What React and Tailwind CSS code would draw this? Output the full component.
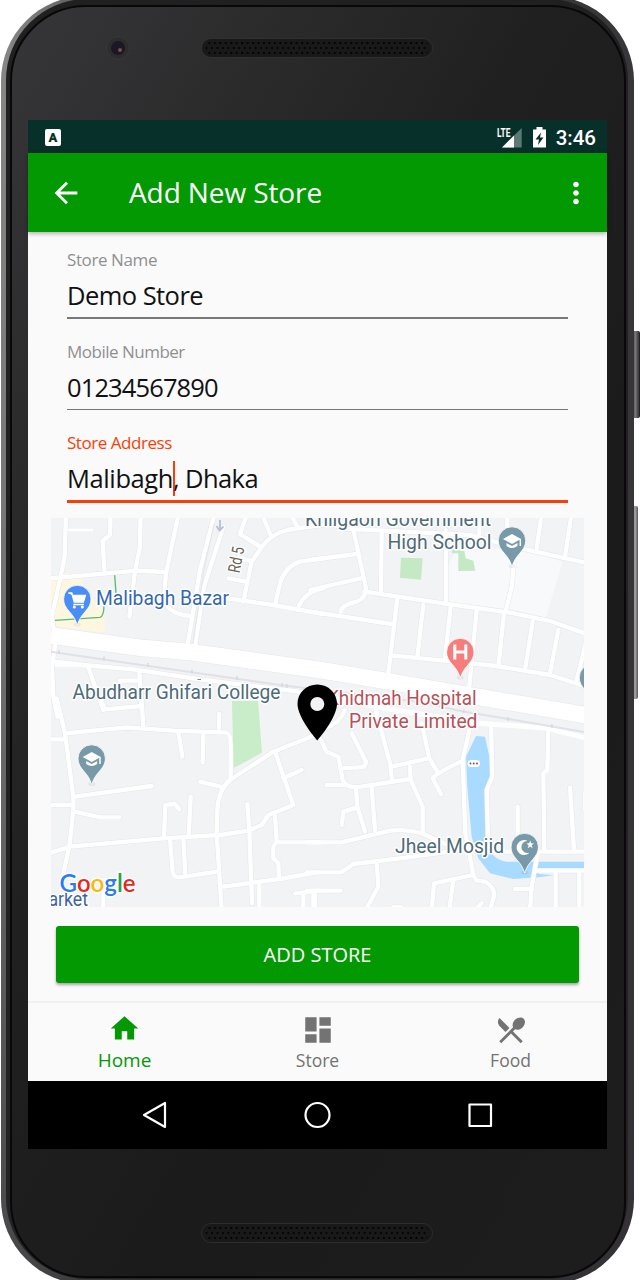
import React from "react";
import { MdArrowBack, MdMoreVert, MdHome, MdDashboard, MdRestaurantMenu } from "react-icons/md";

// Map geometry is stored in four tiles, each drawn at three units per pixel.
const TILES = [
  {
    at: "translate(40 510) scale(0.33333)",
    roads: [
      "M78 10 L74 140 L62 200 L35 320 L48 400",
      "M212 10 L210 75 L188 92 L194 190",
      "M302 10 L300 110 L285 185 L268 320",
      "M416 10 L378 190 L372 260 Q375 310 450 318",
      "M20 206 L200 190 L290 182 L378 186",
      "M524 10 L480 180 L442 410",
      "M550 50 L492 230 L465 410",
      "M622 10 L600 72 L660 110",
      "M850 44 L740 60 Q690 75 665 112 L635 155 L610 275",
      "M597 142 L635 155",
      "M565 205 L620 216",
      "M665 10 L692 75",
      "M750 10 L772 50",
      "M560 265 L700 285 L850 312",
      "M850 145 L780 155 Q735 170 720 220 L705 285",
      "M850 235 Q790 245 772 300",
      "M20 452 L130 465 L280 478 L480 508 L800 548",
      "M46 400 L36 470 L40 560 L52 620",
      "M50 466 H143 L190 600",
      "M298 485 L305 600",
      "M240 512 H298",
    ],
  },
  {
    at: "translate(310 510) scale(0.33333)",
    roads: [
      "M0 150 L140 132",
      "M0 240 L152 205",
      "M128 50 L168 235 Q168 265 140 275 Q95 285 92 305",
      "M215 65 L213 245",
      "M163 245 L400 280 L600 308 L720 333 L835 374",
      "M0 305 L245 342",
      "M262 265 L235 490",
      "M340 285 L322 440",
      "M422 290 L405 445",
      "M500 300 L478 530",
      "M582 310 L565 470",
      "M668 335 L645 480",
      "M745 360 L720 490",
      "M830 390 L800 510",
      "M245 436 L400 452 L560 468 L720 495 L835 532",
      "M408 60 V275",
      "M612 160 L605 230 L588 300",
      "M100 56 L480 75 L600 108 L700 130 L835 160",
      "M695 10 L680 115",
      "M785 10 L765 140",
      "M508 10 V75",
      "M592 10 V70",
    ],
  },
  {
    at: "translate(40 700) scale(0.33333)",
    roads: [
      "M50 -5 L75 100 L100 290 L100 330 L88 440 L70 520",
      "M20 118 H75",
      "M75 100 L260 82 L400 92 L560 98 Q574 103 572 150 L572 235",
      "M182 0 L195 28 L305 18",
      "M305 0 L310 85",
      "M415 95 L427 170",
      "M490 100 L488 188",
      "M537 42 V95",
      "M105 290 L335 258",
      "M38 315 H100",
      "M105 335 L180 352 H238",
      "M20 462 L90 440 L370 415 L540 405 L625 392 L665 375 L685 345 L760 315 L705 155",
      "M730 235 L785 210",
      "M840 100 L700 155 L570 240 Q535 270 532 330 L530 400 L545 630",
      "M480 245 L550 262",
      "M372 415 L376 315 L405 312 L418 328",
      "M452 290 L446 410",
      "M390 418 L398 515 Q400 532 420 532 L530 515",
      "M430 415 L436 525",
      "M622 312 L628 390 L636 610",
      "M705 345 L710 425 L700 440 V475 L715 490 L717 535",
      "M710 427 H840",
      "M550 560 L720 537 L830 517",
      "M658 550 V630",
      "M765 580 L840 572",
      "M790 580 V630",
      "M825 580 V630",
      "M190 620 V540 H240",
    ],
  },
  {
    at: "translate(310 700) scale(0.33333)",
    roads: [
      "M22 100 L50 155 L85 170 L98 240 Q105 262 140 262 L300 237",
      "M50 255 H105",
      "M125 100 L168 185 Q168 202 150 202 L92 205",
      "M105 30 Q90 70 50 82",
      "M195 20 L240 190 L246 240",
      "M245 200 L355 175",
      "M335 70 L358 175 L385 220",
      "M393 283 L368 235 Q375 222 458 182",
      "M485 60 L458 180 L466 400 L490 525",
      "M300 200 L302 240 L338 320 L338 402",
      "M138 262 L142 320 L165 395",
      "M185 262 L195 390",
      "M142 322 L100 335 L95 375",
      "M-10 427 H95 L240 392 Q290 386 340 402 L400 430 L520 455 H835",
      "M-10 517 H95 L130 492 L270 475 L420 455",
      "M200 485 L205 560 L170 625",
      "M-10 572 H92",
      "M10 572 V630",
      "M365 630 L372 550 L490 525 L500 542 L525 545 Q556 562 552 590 L540 630",
      "M430 540 L418 630",
      "M515 610 L495 630",
      "M250 622 H275",
      "M543 70 L547 230 L530 270 L535 450",
      "M715 85 L712 210 L700 220 L703 450",
      "M780 262 L792 450",
      "M826 275 V330",
      "M623 320 V450",
      "M682 512 H835",
      "M684 455 L665 560 L660 630",
      "M615 567 H665",
      "M737 520 V630",
      "M808 520 V630",
    ],
  },
];

function RoadLayer({ width, color }) {
  return TILES.map((t) => (
    <g key={t.at} transform={t.at} fill="none" stroke={color} strokeWidth={width} strokeLinecap="round" strokeLinejoin="round">
      {t.roads.map((d) => (
        <path key={d} d={d} />
      ))}
    </g>
  ));
}

function Pin({ x, y, color, children }) {
  return (
    <g transform={`translate(${x} ${y})`}>
      <ellipse cx="0" cy="25" rx="3.500" ry="2" fill="#000" opacity=".06" />
      <path d="M0 25.500 C-2 19.500 -4 16.500 -8 12 C-11.500 8 -13.700 4.500 -13.700 -.5 A13.700 13.700 0 0 1 13.700 -.5 C13.700 4.500 11.500 8 8 12 C4 16.500 2 19.500 0 25.500Z" fill={color} stroke="#fff" strokeWidth=".8" />
      {children}
    </g>
  );
}

const Cap = () => (
  <g>
    <path d="M-9 -2 L0 -7 L9 -2 L0 3 Z" fill="#fff" />
    <path d="M-5.500 2 V5 Q0 9 5.500 5 V2 L0 5 Z" fill="#fff" />
    <path d="M8.300 -2 V5" stroke="#fff" strokeWidth="1.500" />
  </g>
);

function Label({ x, y, w, color, children, size = 20 }) {
  return (
    <text x={x} y={y} textLength={w} lengthAdjust="spacingAndGlyphs" fontSize={size} fill={color} stroke="#fff" strokeWidth="3" strokeLinejoin="round" paintOrder="stroke">
      {children}
    </text>
  );
}

function StoreMap() {
  return (
    <svg className="block h-[389px] w-[533px] font-['Roboto',sans-serif]" viewBox="51 518 533 389">
      <rect x="51" y="518" width="533" height="389" fill="#f1f3f4" />
      <g transform={TILES[0].at}>
        <path d="M30 210 H52 L36 300 L30 320Z M62 190 L118 190 L135 240 L192 310 L196 368 L30 345Z M30 400 H42 V430 H30Z" fill="#fef7e0" />
        <path d="M224 195 L228 250 M44 331 L180 322 Q192 318 192 285" fill="none" stroke="#5bb974" strokeWidth="4" />
      </g>
      <g transform={TILES[1].at}>
        <path d="M410 275 V170 L445 110 L640 120 L758 155 L735 230 L708 322 L600 298Z" fill="#f8f9fb" />
        <path d="M273 143 L338 145 L333 209 L270 203Z M425 120 L463 122 L467 145 L490 152 L496 182 L445 183 V130 H427Z" fill="#c5e8c5" />
      </g>
      <path d="M232 701 H258 L262 752.700 L233.700 768Z" fill="#c9ecc9" />
      <g transform={TILES[3].at}>
        <path d="M498 108 L525 110 L540 180 L540 235 L527 270 L530 430 Q545 480 590 485 H835 V507 H685 V522 L730 526 L685 532 L610 537 L540 520 L505 475 L485 410 L472 260 L468 170Z" fill="#a9daff" />
      </g>
      <RoadLayer width={16} color="#e4e6e9" />
      <path d="M51 635.300 L140 647.700 L190 652 L320 670 L390 681.700 L590 716" fill="none" stroke="#e4e6e9" strokeWidth="17.500" />
      <RoadLayer width={13} color="#ffffff" />
      <path d="M51 635.300 L140 647.700 L190 652 L320 670 L390 681.700 L590 716" fill="none" stroke="#fff" strokeWidth="16.500" />
      <path d="M306 692 L384 708 L470 722.500 L546 728 L590 739" fill="none" stroke="#fff" strokeWidth="5" />
      <path d="M51 651.700 L107 660 L280 685 L420 702 L463 711.500 L510 719.300 L590 733" fill="none" stroke="#dfe1e7" strokeWidth="2" />
      <path d="M59 650 v4 M104 656.500 v4 M148 663 v4 M192 669.500 v4 M237 676 v4 M282 683 v4 M287 684 v4 M464 709 v4 M508 717 v4 M552 724 v4" stroke="#d2d5dd" strokeWidth="1.200" />
      <path d="M68 530 H93" stroke="#fff" strokeWidth="2.500" />
      <path d="M214 524 L204 570 L193 643" fill="none" stroke="#e4e6ea" strokeWidth="1" />
      <path d="M220 520 V530 M216.500 526 L219.500 530.500 L223.500 526.500" fill="none" stroke="#b9bfd6" strokeWidth="1.800" />
      <path d="M197.500 679.500 H201" stroke="#888" strokeWidth="1" />

      <Label x={305} y={526} w={186} color="#4e6b78">Khilgaon Government</Label>
      <Label x={387.500} y={549} w={104} color="#4e6b78">High School</Label>
      <Label x={96} y={604.700} w={133} color="#3367b0">Malibagh Bazar</Label>
      <Label x={72.500} y={699} w={208} color="#4e6b78">Abudharr Ghifari College</Label>
      <Label x={327} y={705} w={149.500} color="#b85057">Khidmah Hospital</Label>
      <Label x={349} y={728} w={128.500} color="#b85057">Private Limited</Label>
      <Label x={395} y={853} w={109} color="#4e6b78">Jheel Mosjid</Label>
      <Label x={33} y={905.500} w={55} color="#3d64a0">Market</Label>
      <g transform="translate(239.500 573.500) rotate(-79)">
        <Label x={0} y={0} w={26} size={17} color="#6a6458">Rd 5</Label>
      </g>

      <Pin x={77.300} y={599.500} color="#4a8df6">
        <path d="M-9 -6.500 H-5.500 L-3 2.500 H6 L8 -4 H-4.500" fill="#fff" stroke="#fff" strokeWidth="1.500" />
        <path d="M-4 5 H6.500" stroke="#fff" strokeWidth="1.500" />
        <circle cx="-3" cy="7.500" r="1.500" fill="#fff" />
        <circle cx="5" cy="7.500" r="1.500" fill="#fff" />
      </Pin>
      <Pin x={512} y={541} color="#7799a8"><Cap /></Pin>
      <Pin x={91.700} y={759} color="#7799a8"><Cap /></Pin>
      <Pin x={460.300} y={652.500} color="#f77c7c">
        <path d="M-5.500 -8 V7 M5.500 -8 V7 M-5.500 -.5 H5.500" stroke="#fff" strokeWidth="3" />
      </Pin>
      <Pin x={524.700} y={847.500} color="#7799a8">
        <path d="M3 -6.500 A7.500 7.500 0 1 0 5 5 A6 6 0 1 1 3 -6.500Z" fill="#fff" />
        <path d="M5.500 -7 L6.500 -4.200 L9.300 -4 L7 -2.200 L7.900 .7 L5.500 -1 L3 .7 L3.900 -2.200 L1.700 -4 L4.500 -4.200Z" fill="#fff" />
      </Pin>
      <Pin x={593} y={678} color="#7799a8" />

      <rect x="467.500" y="760" width="12.500" height="7" rx="3.500" fill="#fff" />
      <g fill="#704050">
        <circle cx="470.500" cy="763.500" r=".9" />
        <circle cx="473.700" cy="763.500" r=".9" />
        <circle cx="477" cy="763.500" r=".9" />
      </g>

      <text x="59.500" y="891.500" textLength="76" lengthAdjust="spacingAndGlyphs" className="font-['Lato',sans-serif] font-semibold" fontSize="25.500" stroke="#fff" strokeWidth="3" paintOrder="stroke">
        <tspan fill="#2a7bf5">G</tspan>
        <tspan fill="#e8271c">o</tspan>
        <tspan fill="#fbb805">o</tspan>
        <tspan fill="#2a7bf5">g</tspan>
        <tspan fill="#27a043">l</tspan>
        <tspan fill="#e8271c">e</tspan>
      </text>

      <path fillRule="evenodd" d="M317.300 684.500 C306 684.500 297.500 693 297.500 704 C297.500 718 317.300 740.500 317.300 740.500 C317.300 740.500 337 718 337 704 C337 693 328.500 684.500 317.300 684.500Z M317.300 697 A7 7 0 1 1 317.300 711 A7 7 0 1 1 317.300 697Z" fill="#000" />
    </svg>
  );
}

function Grille() {
  return (
    <svg className="block h-5 w-[232px]" viewBox="0 0 232 20">
      <defs>
        <pattern id="holes" width="5.450" height="10" patternUnits="userSpaceOnUse" x="1" y="0">
          <circle cx="2" cy="5" r="1.250" fill="#050505" />
          <circle cx="4.700" cy="10" r="1.250" fill="#050505" />
          <circle cx="4.700" cy="0" r="1.250" fill="#050505" />
        </pattern>
      </defs>
      <rect x=".5" y=".5" width="231" height="19" rx="9.500" fill="#191919" stroke="#3b3b3b" strokeOpacity=".6" />
      <rect x="4" y="3" width="224" height="14" rx="7" fill="url(#holes)" />
    </svg>
  );
}

function Field({ label, labelClass, lineClass, children }) {
  return (
    <div className="flex h-[91.500px] flex-col">
      <span className={"h-6 text-[17px] leading-6 " + labelClass}>{label}</span>
      <div className="mt-[3px] mb-0.5 flex h-10 items-center whitespace-pre text-[25.500px] leading-10 text-[#111]">{children}</div>
      <div className={lineClass} />
    </div>
  );
}

function StatusBar() {
  return (
    <div className="flex h-[33px] shrink-0 items-center justify-between bg-[#07302b] pl-[17px] pr-[11px] pt-0.5">
      <div className="mt-[-1px] flex h-[17px] w-4 items-center justify-center rounded-xs bg-white font-['Roboto',sans-serif] text-[13px] leading-none font-black text-[#07302b]">A</div>
      <div className="flex items-center font-['Roboto',sans-serif]">
        <svg className="h-6 w-[50px] -translate-y-px" viewBox="0 0 50 24">
          <path d="M5 22.500 L24.700 3 V22.500Z" fill="#5b7a75" />
          <path d="M5 22.500 L17 10.500 V22.500Z" fill="#fff" />
          <text x="0" y="12" fontSize="12.500" fontWeight="700" textLength="13.500" lengthAdjust="spacingAndGlyphs" fill="#fff" stroke="#07302b" strokeWidth="1.500" paintOrder="stroke">LTE</text>
          <path d="M39.500 2 H45.500 V4.500 H49 V22.500 H36 V4.500 H39.500Z" fill="#fff" />
          <path d="M44 7.500 L38.500 14.500 H42 L41 20 L46.500 12.500 H43Z" fill="#07302b" />
        </svg>
        <span className="ml-[9px] text-[20.500px] leading-6 font-medium text-white">3:46</span>
      </div>
    </div>
  );
}

function Tab({ icon, label, className }) {
  return (
    <div className={"flex w-[193px] flex-col items-center " + className}>
      {icon}
      <span className="leading-6">{label}</span>
    </div>
  );
}

export default function App() {
  return (
    <div className="relative h-[1280px] w-[640px] overflow-hidden bg-white font-['Open_Sans','Noto_Sans',sans-serif]">
      <div className="absolute top-[331px] left-[632px] h-[87px] w-2 rounded-r-xs border-r border-[#222] bg-linear-to-r from-[#444] via-[#777] to-[#333]" />
      <div className="absolute top-[506px] left-[632px] h-[193px] w-1.5 rounded-r-xs bg-linear-to-r from-[#444] via-[#aaa] to-[#555]" />
      <div className="relative -mt-1 ml-px h-[1288px] w-[633px] rounded-[85px] bg-[linear-gradient(180deg,rgba(50,48,52,0)_0%,rgba(50,48,52,0.2)_40%,rgba(50,48,52,0.75)_100%),linear-gradient(90deg,#8a8a8a_0%,#777_6%,#383638_22%,#383638_100%)] pt-[3px] pb-[5px] pl-[5px]">
        <div className="h-full w-[622px] rounded-[81px] bg-[linear-gradient(180deg,#202021,#242324)] pt-[6px] pr-[2px] pb-px pl-[4px]">
          <div className="h-full w-full rounded-[76px] border-2 border-[#080808] bg-[linear-gradient(120deg,#363538_0%,#2d2c2d_18%,#202020_40%,#1b1b1b_65%,#1d1d1d_100%)]">
            <div className="flex h-full flex-col items-start pl-4">
              <div className="relative h-[113px] w-[579px] shrink-0">
                <div className="ml-[173px] pt-[31px]"><Grille /></div>
                <div className="absolute top-[29px] left-[78px] flex h-6 w-6 items-center justify-center rounded-full border border-[#39383a] bg-[#2d2c2e]">
                  <div className="flex h-3.5 w-3.5 items-center justify-center rounded-full bg-[#1b1823] pt-1 pl-1">
                    <div className="h-1 w-1 rounded-full bg-[#75505b]" />
                  </div>
                </div>
              </div>
              <div className="flex h-[1029px] w-[579px] shrink-0 flex-col bg-[#fafafa]">
                <StatusBar />
                <header className="relative flex h-[79px] shrink-0 items-center bg-[#039903] pr-[14px] pl-[21px] text-white shadow-[0_2px_4px_rgba(0,0,0,0.28)]">
                  <MdArrowBack className="h-[34px] w-[34px]" />
                  <h1 className="ml-[46px] flex-1 pb-0.5 text-[28px] leading-9 tracking-[-0.100px]">Add New Store</h1>
                  <MdMoreVert className="h-[34px] w-[34px]" />
                </header>
                <main className="h-[769px] shrink-0">
                  <div className="mx-[39px] h-[286px] pt-[16px]">
                    <Field label="Store Name" labelClass="tracking-[-0.400px] text-[#909090]" lineClass="h-[1.500px] bg-[#777]">
                      <span className="tracking-[-0.550px]">Demo Store</span>
                    </Field>
                    <Field label="Mobile Number" labelClass="tracking-[-0.500px] text-[#909090]" lineClass="h-[1.500px] bg-[#777]">
                      <span className="tracking-[-0.880px]">01234567890</span>
                    </Field>
                    <Field label="Store Address" labelClass="tracking-[-0.450px] text-[#f93f08]" lineClass="h-[3px] bg-[#f93f08]">
                      <span className="tracking-[-0.400px]">Malibagh</span>
                      <span className="-mr-0.5 h-[35px] w-0.5 bg-[#f93f08]" />
                      <span className="tracking-[-0.600px]">, Dhaka</span>
                    </Field>
                  </div>
                  <div className="ml-[23px]"><StoreMap /></div>
                  <button className="mt-[19px] ml-7 block h-[57px] w-[523px] rounded-[3px] bg-[#039903] text-[20px] text-white shadow-[0_2px_3px_rgba(60,30,60,0.4)]">ADD STORE</button>
                </main>
                <nav className="flex h-20 shrink-0 border-t-2 border-[#f0f0f0] pt-[5px]">
                  <Tab className="text-[19px] text-[#039903]" label="Home" icon={<MdHome className="mt-1 mb-[3px] h-[33px] w-[33px]" />} />
                  <Tab className="text-[17.500px] text-[#737373]" label="Store" icon={<MdDashboard className="mt-[5px] mb-px h-[34px] w-[34px]" />} />
                  <Tab className="text-[17.500px] text-[#737373]" label="Food" icon={<MdRestaurantMenu className="mt-[5px] mb-px h-[34px] w-[34px]" />} />
                </nav>
                <div className="flex h-[68px] shrink-0 items-center justify-between bg-black pr-[113px] pl-[113px]">
                  <svg className="h-7 w-7" viewBox="0 0 28 28" fill="none" stroke="#fff" strokeWidth="2.200" strokeLinejoin="round"><path d="M24 2 V26 L3 14Z" /></svg>
                  <svg className="h-7 w-7" viewBox="0 0 28 28" fill="none" stroke="#fff" strokeWidth="2.200"><circle cx="13.500" cy="14" r="12" /></svg>
                  <svg className="h-7 w-7" viewBox="0 0 28 28" fill="none" stroke="#fff" strokeWidth="2.200" strokeLinejoin="round"><rect x="3.500" y="3.500" width="21.500" height="21.500" /></svg>
                </div>
              </div>
              <div className="ml-[173px] pt-[74px]"><Grille /></div>
            </div>
          </div>
        </div>
      </div>
    </div>
  );
}
